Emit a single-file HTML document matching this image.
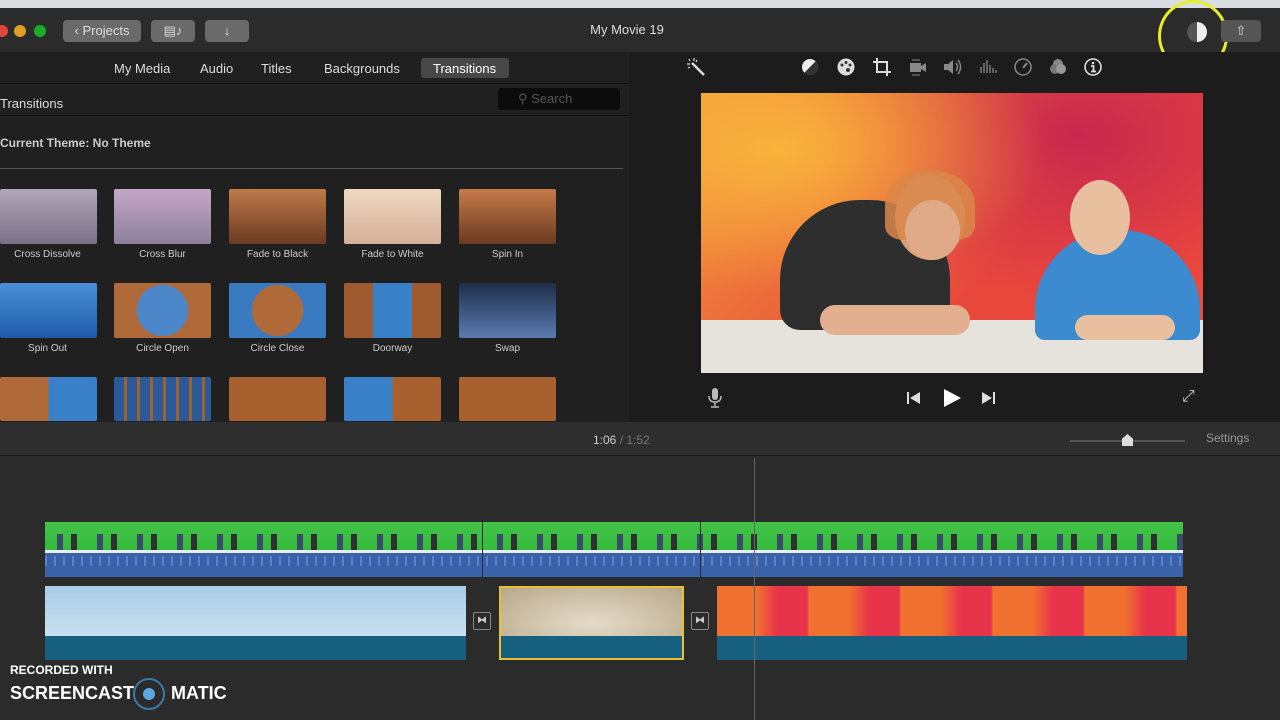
<!DOCTYPE html>
<html><head><meta charset="utf-8"><style>
*{margin:0;padding:0;box-sizing:border-box}
body{width:1280px;height:720px;overflow:hidden;background:#2c2c2c;font-family:"Liberation Sans",sans-serif;position:relative;color:#ddd}
.a{position:absolute}
.btn{position:absolute;top:20px;height:22px;background:#6a6a6a;border-radius:4px;color:#ddd;font-size:13px;line-height:22px;text-align:center}
.th{position:absolute;width:97px;height:55px;border-radius:2px}
.lb{position:absolute;width:115px;text-align:center;font-size:10px;color:#ccc}
.tab{position:absolute;top:61px;font-size:13px;color:#ddd}
svg.i{position:absolute;top:57px}
</style></head><body>
<div class="a" style="left:0;top:0;width:1280px;height:8px;background:#d8dde2"></div>
<div class="a" style="left:0;top:8px;width:1280px;height:44px;background:#2b2b2b"></div>
<div class="a" style="left:-4px;top:25px;width:12px;height:12px;border-radius:6px;background:#e0443e"></div>
<div class="a" style="left:14px;top:25px;width:12px;height:12px;border-radius:6px;background:#dea123"></div>
<div class="a" style="left:34px;top:25px;width:12px;height:12px;border-radius:6px;background:#1aab29"></div>
<div class="btn" style="left:63px;width:78px">‹ Projects</div>
<div class="btn" style="left:151px;width:44px">▤♪</div>
<div class="btn" style="left:205px;width:44px">↓</div>
<div class="a" style="left:560px;top:22px;width:134px;text-align:center;font-size:13px;color:#ddd">My Movie 19</div>
<div class="a" style="left:1187px;top:22px;width:20px;height:20px;border-radius:10px;background:linear-gradient(90deg,#555 50%,#eee 50%)"></div>
<div class="a" style="left:1158px;top:0;width:70px;height:72px;border-radius:50%;border:3px solid #e6ef2a"></div>
<div class="btn" style="left:1221px;width:40px;background:#555">⇧</div>
<!-- browser -->
<div class="a" style="left:0;top:52px;width:629px;height:370px;background:#202020"></div>
<div class="tab" style="left:114px">My Media</div>
<div class="tab" style="left:200px">Audio</div>
<div class="tab" style="left:261px">Titles</div>
<div class="tab" style="left:324px">Backgrounds</div>
<div class="a" style="left:421px;top:58px;width:88px;height:20px;background:#474747;border-radius:3px"></div>
<div class="tab" style="left:433px;color:#fff">Transitions</div>
<div class="a" style="left:0;top:83px;width:629px;height:1px;background:#111"></div>
<div class="a" style="left:0;top:96px;font-size:13px;color:#ddd">Transitions</div>
<div class="a" style="left:498px;top:88px;width:122px;height:22px;background:#0c0c0c;border-radius:3px;font-size:13px;color:#555;line-height:22px;padding-left:20px">⚲ Search</div>
<div class="a" style="left:0;top:115px;width:629px;height:1px;background:#111"></div>
<div class="a" style="left:0;top:136px;font-size:12px;font-weight:bold;color:#ccc">Current Theme: No Theme</div>
<div class="a" style="left:0;top:168px;width:623px;height:1px;background:#555"></div>
<div class="th" style="left:0;top:189px;background:linear-gradient(#b0a8b8,#7a7086)"></div>
<div class="th" style="left:114px;top:189px;background:linear-gradient(#c5a7c7,#8c7f9a)"></div>
<div class="th" style="left:229px;top:189px;background:linear-gradient(#c07a4a,#6a3a22)"></div>
<div class="th" style="left:344px;top:189px;background:linear-gradient(#efd8c0,#d4b09a)"></div>
<div class="th" style="left:459px;top:189px;background:linear-gradient(#c77a48,#6a3a22)"></div>
<div class="lb" style="left:-10px;top:249px">Cross Dissolve</div>
<div class="lb" style="left:105px;top:249px">Cross Blur</div>
<div class="lb" style="left:220px;top:249px">Fade to Black</div>
<div class="lb" style="left:335px;top:249px">Fade to White</div>
<div class="lb" style="left:450px;top:249px">Spin In</div>
<div class="th" style="left:0;top:283px;background:linear-gradient(#4a90d8,#1e5aa8)"></div>
<div class="th" style="left:114px;top:283px;background:radial-gradient(circle,#4a86c8 45%,#b06a3a 47%)"></div>
<div class="th" style="left:229px;top:283px;background:radial-gradient(circle,#b06a3a 45%,#3a7ac0 47%)"></div>
<div class="th" style="left:344px;top:283px;background:linear-gradient(90deg,#a05a30 30%,#3a80c8 30%,#3a80c8 70%,#a05a30 70%)"></div>
<div class="th" style="left:459px;top:283px;background:linear-gradient(#1e2e4a,#5a7ab0)"></div>
<div class="lb" style="left:-10px;top:343px">Spin Out</div>
<div class="lb" style="left:105px;top:343px">Circle Open</div>
<div class="lb" style="left:220px;top:343px">Circle Close</div>
<div class="lb" style="left:335px;top:343px">Doorway</div>
<div class="lb" style="left:450px;top:343px">Swap</div>
<div class="th" style="left:0;top:377px;height:44px;background:linear-gradient(90deg,#b06a3a 50%,#3a80c8 50%)"></div>
<div class="th" style="left:114px;top:377px;height:44px;background:repeating-linear-gradient(90deg,#2a5a9a 0 10px,#a06030 10px 13px)"></div>
<div class="th" style="left:229px;top:377px;height:44px;background:#a8602e"></div>
<div class="th" style="left:344px;top:377px;height:44px;background:linear-gradient(90deg,#3a80c8 50%,#a8602e 50%)"></div>
<div class="th" style="left:459px;top:377px;height:44px;background:#a8602e"></div>
<!-- viewer -->
<div class="a" style="left:629px;top:52px;width:651px;height:370px;background:#1c1c1c"></div>
<svg class="i" style="left:686px" width="20" height="20" viewBox="0 0 20 20"><path d="M6 6L18 18" stroke="#ddd" stroke-width="2.5"/><path d="M3 2l1 2M8 1v3M1 7h3M2 11l2-1M11 3l-1 2" stroke="#ddd" stroke-width="1.2"/></svg>
<svg class="i" style="left:800px" width="20" height="20" viewBox="0 0 20 20"><circle cx="10" cy="10" r="8" fill="#eee"/><path d="M15.7 4.3A8 8 0 0 1 4.3 15.7Z" fill="#333"/></svg>
<svg class="i" style="left:836px" width="20" height="20" viewBox="0 0 20 20"><circle cx="10" cy="10" r="8.5" fill="#ddd"/><circle cx="6" cy="8" r="1.5" fill="#333"/><circle cx="10" cy="5.5" r="1.5" fill="#333"/><circle cx="14" cy="8" r="1.5" fill="#333"/><circle cx="12" cy="13" r="2" fill="#333"/></svg>
<svg class="i" style="left:872px" width="20" height="20" viewBox="0 0 20 20"><path d="M5 1v14h14M1 5h14v14" stroke="#ddd" stroke-width="2" fill="none"/></svg>
<svg class="i" style="left:907px" width="20" height="20" viewBox="0 0 20 20"><rect x="3" y="6" width="11" height="9" fill="#888"/><path d="M14 9l5-3v9l-5-3z" fill="#888"/><path d="M5 3h8M5 18h8" stroke="#888"/></svg>
<svg class="i" style="left:942px" width="20" height="20" viewBox="0 0 20 20"><path d="M2 7h4l5-4v14l-5-4H2z" fill="#888"/><path d="M14 6q3 4 0 8M16 3q5 7 0 14" stroke="#888" fill="none" stroke-width="1.5"/></svg>
<svg class="i" style="left:978px" width="20" height="20" viewBox="0 0 20 20"><path d="M3 16V10M6 16V6M9 16V3M12 16V8M15 16V11M18 16V13" stroke="#888" stroke-width="1.3"/></svg>
<svg class="i" style="left:1013px" width="20" height="20" viewBox="0 0 20 20"><circle cx="10" cy="10" r="8" stroke="#888" stroke-width="1.5" fill="none"/><path d="M10 11l4-5" stroke="#888" stroke-width="2"/></svg>
<svg class="i" style="left:1048px" width="20" height="20" viewBox="0 0 20 20"><circle cx="10" cy="7" r="5" fill="#888"/><circle cx="7" cy="12" r="5" fill="#777"/><circle cx="13" cy="12" r="5" fill="#999"/></svg>
<svg class="i" style="left:1083px" width="20" height="20" viewBox="0 0 20 20"><circle cx="10" cy="10" r="8" stroke="#ddd" stroke-width="1.6" fill="none"/><circle cx="10" cy="6" r="1.3" fill="#ddd"/><path d="M8 9h2.5v5M8 14.5h5" stroke="#ddd" stroke-width="1.8"/></svg>
<div class="a" style="left:701px;top:93px;width:502px;height:280px;background:radial-gradient(ellipse at 15% 20%,#f8b43c,transparent 45%),radial-gradient(ellipse at 75% 15%,#c8284e,transparent 50%),linear-gradient(135deg,#f39a3a,#e8483c 60%,#ef4a3c)"></div>
<div class="a" style="left:701px;top:320px;width:502px;height:53px;background:#e6e2dc"></div>
<div class="a" style="left:780px;top:200px;width:170px;height:130px;border-radius:80px 80px 20px 20px;background:#2e2e2e"></div>
<div class="a" style="left:895px;top:175px;width:70px;height:85px;border-radius:50%;background:#d8a07a"></div>
<div class="a" style="left:885px;top:170px;width:90px;height:70px;border-radius:50% 50% 20% 20%;background:#d9874a;opacity:.85"></div>
<div class="a" style="left:905px;top:200px;width:55px;height:60px;border-radius:50%;background:#e0aa88"></div>
<div class="a" style="left:1035px;top:230px;width:165px;height:110px;border-radius:80px 80px 10px 10px;background:#3c8ad0"></div>
<div class="a" style="left:1070px;top:180px;width:60px;height:75px;border-radius:50%;background:#e8c0a0"></div>
<div class="a" style="left:820px;top:305px;width:150px;height:30px;border-radius:15px;background:#e2b090"></div>
<div class="a" style="left:1075px;top:315px;width:100px;height:25px;border-radius:15px;background:#e8c0a0"></div>
<svg class="a" style="left:707px;top:387px" width="16" height="22" viewBox="0 0 16 22"><rect x="5" y="1" width="6" height="12" rx="3" fill="#bbb"/><path d="M2 9q0 6 6 6t6-6M8 15v4M4 20h8" stroke="#bbb" fill="none" stroke-width="1.5"/></svg>
<svg class="a" style="left:906px;top:391px" width="16" height="14" viewBox="0 0 16 14"><rect x="1" y="1" width="2" height="12" fill="#ddd"/><path d="M14 1v12L4 7z" fill="#ddd"/></svg>
<svg class="a" style="left:942px;top:388px" width="20" height="20" viewBox="0 0 20 20"><path d="M2 1v18l17-9z" fill="#fff"/></svg>
<svg class="a" style="left:980px;top:391px" width="16" height="14" viewBox="0 0 16 14"><rect x="13" y="1" width="2" height="12" fill="#ddd"/><path d="M2 1v12l10-6z" fill="#ddd"/></svg>
<div class="a" style="left:1182px;top:388px;font-size:16px;color:#ccc">⤢</div>
<!-- timeline -->
<div class="a" style="left:0;top:422px;width:1280px;height:34px;background:#2e2e2e;border-bottom:1px solid #1a1a1a"></div>
<div class="a" style="left:593px;top:433px;font-size:12px;color:#ccc">1:06 <span style="color:#777">/ 1:52</span></div>
<div class="a" style="left:1070px;top:440px;width:115px;height:2px;background:#555"></div>
<div class="a" style="left:1122px;top:434px;width:11px;height:12px;background:#ddd;clip-path:polygon(50% 0,100% 40%,100% 100%,0 100%,0 40%)"></div>
<div class="a" style="left:1206px;top:431px;font-size:12px;color:#999">Settings</div>
<div class="a" style="left:0;top:457px;width:1280px;height:263px;background:#2b2b2b"></div>
<div class="a" style="left:45px;top:522px;width:1138px;height:32px;background:linear-gradient(#45c24a,#2fbb3a)"></div>
<div class="a" style="left:45px;top:534px;width:1138px;height:18px;background:repeating-linear-gradient(90deg,transparent 0 12px,#3a4a68 12px 18px,transparent 18px 26px,#303030 26px 32px,transparent 32px 40px)"></div>
<div class="a" style="left:45px;top:550px;width:1138px;height:3px;background:#e8eef2"></div>
<div class="a" style="left:45px;top:553px;width:1138px;height:24px;background:#3a62aa"></div>
<div class="a" style="left:45px;top:556px;width:1138px;height:10px;background:repeating-linear-gradient(90deg,#5a82c8 0 2px,transparent 2px 9px)"></div>
<div class="a" style="left:482px;top:522px;width:1px;height:55px;background:#2b2b2b"></div>
<div class="a" style="left:700px;top:522px;width:1px;height:55px;background:#2b2b2b"></div>
<div class="a" style="left:45px;top:586px;width:421px;height:50px;background:linear-gradient(#a8cce8,#c8e0f0)"></div>
<div class="a" style="left:45px;top:636px;width:421px;height:24px;background:#17607f"></div>
<div class="a" style="left:499px;top:586px;width:185px;height:74px;border:2px solid #e8c030;background:linear-gradient(#17607f,#17607f) bottom/100% 22px no-repeat,radial-gradient(ellipse,#e4dccb,#b8a888)"></div>
<div class="a" style="left:717px;top:586px;width:470px;height:50px;background:repeating-linear-gradient(90deg,#f07030 0 40px,#e8344a 60px 90px,#f07030 92px)"></div>
<div class="a" style="left:717px;top:636px;width:470px;height:24px;background:#17607f"></div>
<div class="a" style="left:473px;top:612px;width:18px;height:18px;border:1px solid #888;border-radius:2px;font-size:10px;color:#ccc;text-align:center;line-height:16px">⧓</div>
<div class="a" style="left:691px;top:612px;width:18px;height:18px;border:1px solid #888;border-radius:2px;font-size:10px;color:#ccc;text-align:center;line-height:16px">⧓</div>
<div class="a" style="left:754px;top:458px;width:1px;height:262px;background:#666"></div>
<div class="a" style="left:10px;top:663px;font-size:12px;font-weight:bold;color:#fff">RECORDED WITH</div>
<div class="a" style="left:10px;top:683px;font-size:18px;font-weight:bold;color:#fff">SCREENCAST</div>
<div class="a" style="left:133px;top:678px;width:32px;height:32px;border-radius:16px;border:2px solid #3a7aa8"></div>
<div class="a" style="left:143px;top:688px;width:12px;height:12px;border-radius:6px;background:#5aaae0"></div>
<div class="a" style="left:171px;top:683px;font-size:18px;font-weight:bold;color:#fff">MATIC</div>
</body></html>
